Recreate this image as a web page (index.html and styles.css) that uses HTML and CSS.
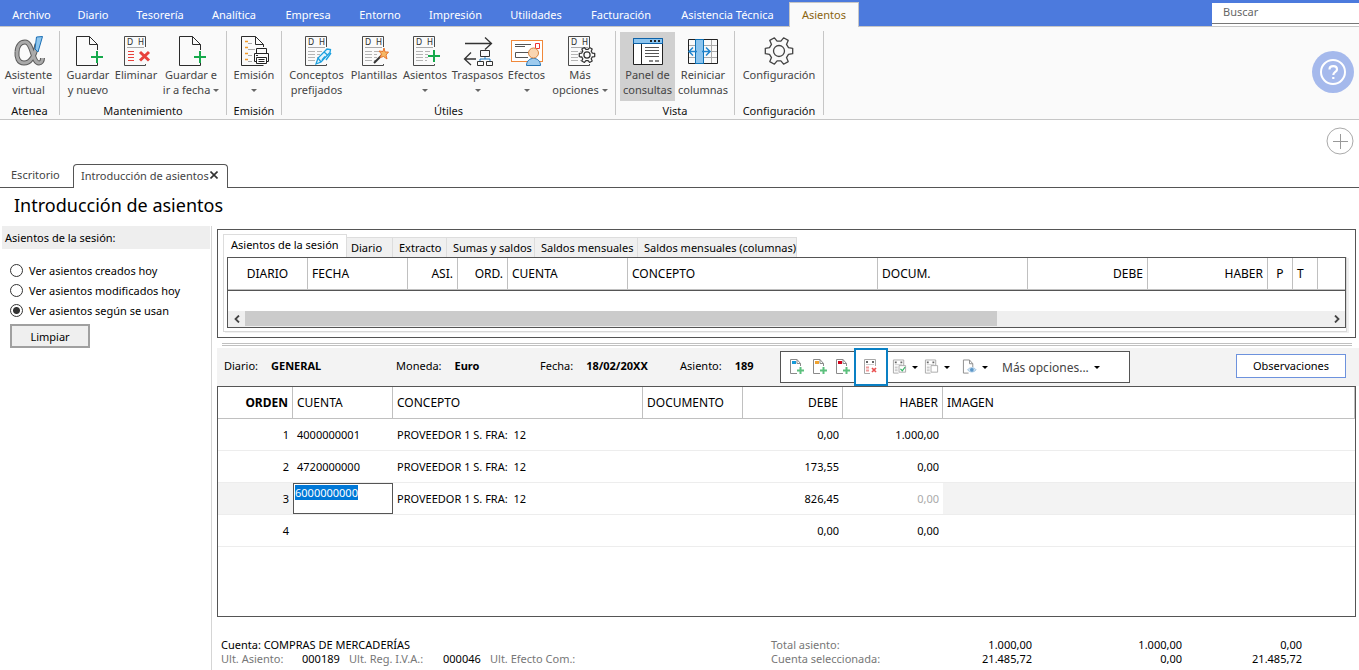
FILE: index.html
```html
<!DOCTYPE html>
<html lang="es">
<head>
<meta charset="utf-8">
<title>Introducción de asientos</title>
<link rel="stylesheet" href="styles.css">
</head>
<body>
<svg class="defs" aria-hidden="true">
  <symbol id="page-plus" viewBox="0 0 32 32">
    <path d="M25.500 15V9.500L17.500 1.500H4.500V30.500H25.500V28M17.500 1.500V9.500H25.500" fill="none" stroke="#2b2b2b"/>
    <path d="M25 16V28M19 22H31" stroke="#16a94b" stroke-width="2"/>
  </symbol>
  <symbol id="ledger" viewBox="0 0 32 32">
    <path d="M25.500 12V1.500H4.500V30.500H25.500V29" fill="none" stroke="#4a4a4a"/>
    <path d="M7 12.500H24" stroke="#aaa"/>
  </symbol>
  <symbol id="ledger-lines" viewBox="0 0 32 32">
    <path d="M7 16.500H14M7 19.500H14M7 22.500H14M7 25.500H14M16 16.500H21M16 19.500H19M16 22.500H19M16 25.500H18" stroke="#b4b4b4"/>
  </symbol>
  <symbol id="gear" viewBox="0 0 32 32">
    <path d="M25.500 12.700L29.700 13.300V18.700L25.500 19.300L23.500 22.600L25.200 26.600L20.600 29.200L17.900 25.800H14.100L11.400 29.200L6.800 26.600L8.500 22.600L6.500 19.300L2.300 18.700V13.300L6.500 12.700L8.500 9.400L6.800 5.400L11.400 2.800L14.100 6.200H17.900L20.600 2.800L25.200 5.400L23.500 9.400Z" stroke-linejoin="round"/>
    <circle cx="16" cy="16" r="5.500"/>
  </symbol>
  <symbol id="mini-page" viewBox="0 0 16 18">
    <path d="M11.500 8V5.500L8 1.500H1.500V15.500H8M8 1.500V5.500H11.500" fill="none" stroke="#8a8a8a"/>
    <path d="M11.500 9V16M8 12.500H15" stroke="#5cc07d" stroke-width="2"/>
  </symbol>
  <symbol id="mini-ledger" viewBox="0 0 16 18">
    <path d="M12.500 8V1.500H1.500V15.500H7" fill="none" stroke="#a8a8a8"/>
    <path d="M3 4H5M9 4H11" stroke="#666" stroke-width="2"/>
    <path d="M3 6.500H11" stroke="#ccc"/>
  </symbol>
</svg>

<nav class="menu" aria-label="Menú principal">
  <a href="#">Archivo</a><a href="#">Diario</a><a href="#">Tesorería</a><a href="#">Analítica</a><a href="#">Empresa</a><a href="#">Entorno</a><a href="#">Impresión</a><a href="#">Utilidades</a><a href="#">Facturación</a><a href="#">Asistencia Técnica</a><a href="#" class="current">Asientos</a>
  <input class="search" type="search" placeholder="Buscar" aria-label="Buscar">
</nav>

<header class="ribbon">
  <section class="group atenea">
    <div class="tools">
      <button class="tool"><svg viewBox="0 0 32 32">
        <path d="M24 9C22 20 18 28 11 28C5 28 3.500 22 4 17C4.500 10 8 7 12 7C20 7 19 28 26 28C28 28 29.500 26 29.500 23" fill="none" stroke="#5b5b5b" stroke-width="5"/>
        <path d="M24 9C22 20 18 28 11 28C5 28 3.500 22 4 17C4.500 10 8 7 12 7C20 7 19 28 26 28C28 28 29.500 26 29.500 23" fill="none" stroke="#aaa" stroke-width="3"/>
        <path d="M23.500 2L29.500 1.500L25 17L22 14Z" fill="#8ec6ee" stroke="#1c6fb5"/></svg><span>Asistente<br>virtual</span></button>
    </div><h2>Atenea</h2>
  </section>
  <section class="group mantenimiento">
    <div class="tools">
      <button class="tool"><svg><use href="#page-plus"/></svg><span>Guardar<br>y nuevo</span></button>
      <button class="tool"><svg viewBox="0 0 32 32"><use href="#ledger"/><text x="7" y="10" class="dh">D</text><text x="18" y="10" class="dh">H</text><path d="M8 16.500H14M8 19.500H14M8 22.500H14M8 25.500H14" stroke="#e8413c"/><path d="M20 17L29 25.500M29 17L20 25.500" stroke="#e8413c" stroke-width="3"/></svg><span>Eliminar</span></button>
      <button class="tool"><svg><use href="#page-plus"/></svg><span>Guardar e<br>ir a fecha <i class="caret"></i></span></button>
    </div><h2>Mantenimiento</h2>
  </section>
  <section class="group emision">
    <div class="tools">
      <button class="tool"><svg viewBox="0 0 32 32"><path d="M25.500 12V9.500L17.500 1.500H3.500V30.500H25.500M17.500 1.500V9.500H25.500" fill="none" stroke="#2b2b2b"/>
        <path d="M7 6.500H10M7 12.500H10M7 18.500H10M7 24.500H10" stroke="#f39a28" stroke-width="1.500"/><path d="M10 8.500H14M10 14.500H17M10 20.500H14M10 26.500H14" stroke="#aaa"/>
        <path d="M18.500 18V13.500H28.500V18M19 26.500H16.500V18.500H30.500V26.500H28" fill="#fafafa" stroke="#222"/><path d="M18.500 22.500H28.500V28.500H18.500ZM20.500 24.500H26.500M20.500 26.500H26.500M18 20.500H20" fill="#fff" stroke="#222"/></svg><span>Emisión<br><i class="caret"></i></span></button>
    </div><h2>Emisión</h2>
  </section>
  <section class="group utiles">
    <div class="tools">
      <button class="tool"><svg viewBox="0 0 32 32"><use href="#ledger"/><text x="7" y="10" class="dh">D</text><text x="18" y="10" class="dh">H</text><use href="#ledger-lines"/><path d="M15 29L17 23L26 14L29.500 14.500L29 17.500L20 27Z" fill="#e3f4fd" stroke="#1ba0df" stroke-width="1.300"/><path d="M17 23L20 27M23 17L26.500 20M21 25L24 21.500M25 25L30 18" fill="none" stroke="#1ba0df" stroke-width="1.300"/></svg><span>Conceptos<br>prefijados</span></button>
      <button class="tool"><svg viewBox="0 0 32 32"><use href="#ledger"/><text x="7" y="10" class="dh">D</text><text x="18" y="10" class="dh">H</text><use href="#ledger-lines"/><path d="M16 28L24 20" stroke="#333" stroke-width="2"/><path d="M26 13L27 17L30.500 17L28 20L29 24L25.500 21.500L22 22.500L23.500 19L21 16L25 16.500Z" fill="#f5b765" stroke="#e8742c"/></svg><span>Plantillas</span></button>
      <button class="tool"><svg viewBox="0 0 32 32"><use href="#ledger"/><text x="7" y="10" class="dh">D</text><text x="18" y="10" class="dh">H</text><use href="#ledger-lines"/><path d="M25 15V27M19 21H31" stroke="#16a94b" stroke-width="2"/></svg><span>Asientos<br><i class="caret"></i></span></button>
      <button class="tool"><svg viewBox="0 0 32 32"><path d="M3 8.500H29M23 2.500L29.500 8.500L23 14.500M9 17.500L2.500 24L9 30M3 24H14" fill="none" stroke="#333" stroke-width="1.300"/><path d="M18.500 15.500H27.500V21.500H18.500ZM15.500 26.500H21.500V30.500H15.500ZM24.500 26.500H30.500V30.500H24.500Z" fill="none" stroke="#333"/><path d="M23 22V24M18 26V24H28V26" fill="none" stroke="#1c7cc5"/></svg><span>Traspasos<br><i class="caret"></i></span></button>
      <button class="tool"><svg viewBox="0 0 32 32"><rect x=".5" y="5.500" width="31" height="21" fill="#fff" stroke="#f0883a"/><path d="M4 9.500H20M4 11.500H14M4.500 17.500H19M4.500 17.500V22.500H17" fill="none" stroke="#555"/><path d="M24.500 8.500H28.500V13.500H24.500Z" fill="none" stroke="#e33"/><path d="M15.500 30.500C15.500 21 29.500 21 29.500 30.500Z" fill="#9ecbee" stroke="#2474b5"/><circle cx="22.500" cy="18" r="5" fill="#fad5b0" stroke="#d8853f"/></svg><span>Efectos<br><i class="caret"></i></span></button>
      <button class="tool"><svg viewBox="0 0 32 32"><use href="#ledger"/><text x="7" y="10" class="dh">D</text><text x="18" y="10" class="dh">H</text><use href="#ledger-lines"/><use href="#gear" x="14" y="11" width="18" height="18" fill="#fafafa" stroke="#333" stroke-width="2.200"/></svg><span>Más<br>opciones <i class="caret"></i></span></button>
    </div><h2>Útiles</h2>
  </section>
  <section class="group vista">
    <div class="tools">
      <button class="tool pressed"><svg viewBox="0 0 32 32"><path d="M1.500 3.500H30.500V29.500H1.500Z" fill="#fff" stroke="#222"/><path d="M1.500 3.500H30.500V8.500H1.500Z" fill="#8cc4ee" stroke="#0d62a8"/><path d="M9.500 9V29" stroke="#222"/><path d="M18 6H20M22 6H24M26 6H28" stroke="#222" stroke-width="2"/><path d="M13 12.500H27M13 15.500H27M13 18.500H27M13 21.500H27" stroke="#555"/><path d="M17 26H21M23 26H27" stroke="#888" stroke-width="2"/></svg><span>Panel de<br>consultas</span></button>
      <button class="tool"><svg viewBox="0 0 32 32"><path d="M1 10.500H30M1 16.500H30M1 22.500H30M24.500 4V28" stroke="#aaa"/><path d="M1.500 4.500H30.500V28.500H1.500Z" fill="none" stroke="#222"/><path d="M8.500 4.500H16.500V28.500H8.500Z" fill="#8cc4ee" stroke="#0d72b8"/><path d="M10 16.500H2M6 12.500L2 16.500L6 20.500M15 16.500H23M19 12.500L23 16.500L19 20.500" fill="none" stroke="#2284cc" stroke-width="1.500"/></svg><span>Reiniciar<br>columnas</span></button>
    </div><h2>Vista</h2>
  </section>
  <section class="group config">
    <div class="tools">
      <button class="tool"><svg viewBox="0 0 32 32"><use href="#gear" fill="none" stroke="#444" stroke-width="1.300"/></svg><span>Configuración</span></button>
    </div><h2>Configuración</h2>
  </section>
  <button class="help" aria-label="Ayuda"><svg viewBox="0 0 42 42"><circle cx="21" cy="21" r="21" fill="#a5b9ec"/><circle cx="21" cy="21" r="12" fill="none" stroke="#fff" stroke-width="2"/><path d="M17.500 18.500C17.500 14 25 14 25 18.500C25 21 21.300 21 21.300 24M21.300 26V28" fill="none" stroke="#fff" stroke-width="2.200"/></svg></button>
</header>

<div class="add-row"><button class="add" aria-label="Añadir"><svg viewBox="0 0 28 28"><circle cx="14" cy="14" r="13" fill="#fff" stroke="#aaa"/><path d="M7 14.500H22M14.500 7V22" stroke="#999"/></svg></button></div>

<nav class="doc-tabs" aria-label="Documentos">
  <a href="#">Escritorio</a>
  <div class="open"><a href="#">Introducción de asientos</a><button aria-label="Cerrar"><svg viewBox="0 0 8 8"><path d="M.5 .5L7.500 7.500M7.500 .5L.5 7.500" stroke="#333" stroke-width="1.600"/></svg></button></div>
</nav>
<h1>Introducción de asientos</h1>

<div class="workspace">
  <aside>
    <h2>Asientos de la sesión:</h2>
    <form>
      <label><input type="radio" name="ver">Ver asientos creados hoy</label>
      <label><input type="radio" name="ver">Ver asientos modificados hoy</label>
      <label><input type="radio" name="ver" checked>Ver asientos según se usan</label>
      <button type="button">Limpiar</button>
    </form>
  </aside>
  <main>
    <section class="session">
      <div class="query-tabs">
        <button class="active">Asientos de la sesión</button><button>Diario</button><button>Extracto</button><button>Sumas y saldos</button><button>Saldos mensuales</button><button>Saldos mensuales (columnas)</button>
      </div>
      <div class="pane"><div class="frame">
        <table class="query">
          <colgroup><col class="w80"><col class="w100"><col class="w50"><col class="w50"><col class="w120"><col class="w250"><col class="w150"><col class="w120"><col class="w120"><col class="w25"><col class="w25"><col></colgroup>
          <tr><th class="c">DIARIO</th><th>FECHA</th><th class="r">ASI.</th><th class="r">ORD.</th><th>CUENTA</th><th>CONCEPTO</th><th>DOCUM.</th><th class="r">DEBE</th><th class="r">HABER</th><th class="c">P</th><th>T</th><th></th></tr>
        </table>
        <div class="scroll">
          <button aria-label="Izquierda"><svg viewBox="0 0 6 8"><path d="M5 .5L1.500 4L5 7.500" fill="none" stroke="#444" stroke-width="1.800"/></svg></button>
          <div class="track"><div class="thumb"></div></div>
          <button aria-label="Derecha"><svg viewBox="0 0 6 8"><path d="M1 .5L4.500 4L1 7.500" fill="none" stroke="#444" stroke-width="1.800"/></svg></button>
        </div>
      </div></div>
    </section>
    <div class="splitter"></div>
    <div class="entry-bar">
      <dl>
        <div><dt>Diario:</dt><dd>GENERAL</dd></div>
        <div><dt>Moneda:</dt><dd>Euro</dd></div>
        <div><dt>Fecha:</dt><dd>18/02/20XX</dd></div>
        <div><dt>Asiento:</dt><dd>189</dd></div>
      </dl>
      <div class="mini-tools">
        <button aria-label="Nuevo azul"><svg viewBox="0 0 16 18"><use href="#mini-page"/><path d="M3 3H7V6H3Z" fill="#169ad8"/></svg></button>
        <button aria-label="Nuevo naranja"><svg viewBox="0 0 16 18"><use href="#mini-page"/><path d="M3 3H7V6H3Z" fill="#f0a330"/></svg></button>
        <button aria-label="Nuevo rojo"><svg viewBox="0 0 16 18"><use href="#mini-page"/><path d="M3 3H7V6H3Z" fill="#d0021b"/></svg></button>
        <button class="marked" aria-label="Eliminar línea"><svg viewBox="0 0 16 18"><use href="#mini-ledger"/><path d="M3 9.500H6M3 12.500H6" stroke="#f09a9a" stroke-width="2"/><path d="M9 10L13 14M13 10L9 14" stroke="#ea5050" stroke-width="1.700"/></svg></button>
        <button class="drop" aria-label="Validar"><svg viewBox="0 0 16 18"><use href="#mini-ledger"/><path d="M3 9.500H6M3 12.500H6" stroke="#ccc" stroke-width="2"/><path d="M7.500 7.500H14.500V14.500H7.500Z" fill="#fff" stroke="#aaa"/><path d="M9 11L11 13L14 9" fill="none" stroke="#35b565" stroke-width="1.300"/></svg><i class="caret"></i></button>
        <button class="drop" aria-label="Copiar"><svg viewBox="0 0 16 18"><use href="#mini-ledger"/><path d="M3 9.500H6M3 12.500H6" stroke="#ccc" stroke-width="2"/><path d="M7.500 7.500H14.500V14.500H7.500Z" fill="#fff" stroke="#aaa"/></svg><i class="caret"></i></button>
        <button class="drop last" aria-label="Ver documento"><svg viewBox="0 0 16 18"><path d="M11.500 9V5.500L8 1.500H1.500V15.500H7M8 1.500V5.500H11.500" fill="none" stroke="#8a8a8a"/><path d="M6 12C8 9 13 9 15 12C13 15 8 15 6 12Z" fill="#cfe2f2" stroke="#9cc0de"/><circle cx="10.500" cy="12" r="2" fill="#5a96c8"/></svg><i class="caret"></i></button>
        <button class="more">Más opciones... <i class="caret"></i></button>
      </div>
      <button class="notes">Observaciones</button>
    </div>
    <div class="entries">
      <table>
        <colgroup><col class="w75"><col class="w100"><col class="w250"><col class="w100"><col class="w100"><col class="w100"><col></colgroup>
        <thead><tr><th class="r strong">ORDEN</th><th>CUENTA</th><th>CONCEPTO</th><th>DOCUMENTO</th><th class="r">DEBE</th><th class="r">HABER</th><th>IMAGEN</th></tr></thead>
        <tbody>
          <tr><td class="r">1</td><td>4000000001</td><td>PROVEEDOR 1 S. FRA:&nbsp; 12</td><td></td><td class="r">0,00</td><td class="r">1.000,00</td><td></td></tr>
          <tr><td class="r">2</td><td>4720000000</td><td>PROVEEDOR 1 S. FRA:&nbsp; 12</td><td></td><td class="r">173,55</td><td class="r">0,00</td><td></td></tr>
          <tr class="selected"><td class="r">3</td><td class="edit"><div><input value="6000000000" aria-label="Cuenta"></div></td><td>PROVEEDOR 1 S. FRA:&nbsp; 12</td><td></td><td class="r">826,45</td><td class="r muted">0,00</td><td></td></tr>
          <tr><td class="r">4</td><td></td><td></td><td></td><td class="r">0,00</td><td class="r">0,00</td><td></td></tr>
        </tbody>
      </table>
    </div>
    <footer>
      <div>
        <p>Cuenta: COMPRAS DE MERCADERÍAS</p>
        <p class="last-used"><span>Ult. Asiento:</span><b>000189</b><span>Ult. Reg. I.V.A.:</span><b>000046</b><span>Ult. Efecto Com.:</span></p>
      </div>
      <table class="totals">
        <colgroup><col><col class="w120"><col class="w150"><col class="w120"></colgroup>
        <tr><th>Total asiento:</th><td>1.000,00</td><td>1.000,00</td><td>0,00</td></tr>
        <tr><th>Cuenta seleccionada:</th><td>21.485,72</td><td>0,00</td><td>21.485,72</td></tr>
      </table>
    </footer>
  </main>
</div>
</body>
</html>
```

FILE: styles.css
```css
* { box-sizing: border-box; }
body { margin: 0; background: #fff; color: #000; font: 11px/15px "Noto Sans", "Open Sans", sans-serif; }
button, input { font: inherit; color: inherit; }
button { margin: 0; padding: 0; border: 0; background: none; white-space: nowrap; }
a { color: inherit; text-decoration: none; }
h1, h2, p, dl, dd { margin: 0; font-weight: 400; }
h2 { font-size: 11px; }
svg { display: block; }
.defs { display: none; }
table { border-collapse: separate; border-spacing: 0; table-layout: fixed; width: 100%; }
th { font-weight: 400; text-align: left; }
.caret { display: inline-block; border: 3px solid transparent; border-top-color: #666; border-bottom: 0; vertical-align: 2px; }

.menu { display: grid; grid-template-columns: 63px 60px 74px 74px 74px 70px 81px 80px 90px 123px 70px 1fr 147px; height: 27px; background: #4c7add; border-bottom: 1px solid #c6c6c6; color: #fff; }
.menu a { padding-top: 7px; text-align: center; white-space: nowrap; }
.menu .current { margin: 2px 0 -1px; padding-top: 4px; background: #fafafa; border: 1px solid #c6c6c6; border-width: 1px 1px 0; color: #8a6410; }
.search { grid-column: 13; height: 21px; margin-top: 3px; padding: 0 11px 3px; border: 0; border-bottom: 1px solid #777; background: #fff; box-shadow: 0 2px #fff; outline: 0; border-radius: 0; }
.search::placeholder { color: #666; opacity: 1; }

.ribbon { display: flex; height: 93px; background: #fafafa; border-bottom: 1px solid #c6c6c6; }
.group { margin: 4px 0; border-right: 1px solid #c6c6c6; padding-top: 1px; }
.tools { display: grid; height: 71px; }
.tool { display: flex; flex-direction: column; align-items: center; height: 69px; padding-top: 3px; color: #444; line-height: 15px; }
.tool svg { width: 32px; height: 32px; }
.tool span { min-height: 30px; }
.pressed { background: #d0d0d0; }
.group h2 { text-align: center; line-height: 15px; color: #111; }
.dh { font: 8px "DejaVu Sans", sans-serif; fill: #333; }
.atenea { width: 60px; }
.atenea .tools { grid-template-columns: 57px; }
.mantenimiento .tools { grid-template-columns: 56px 40px 70px; }
.emision .tools { grid-template-columns: 54px; }
.utiles .tools { grid-template-columns: 69px 46px 56px 49px 49px 64px; }
.utiles .tool:last-child { margin-right: 6px; }
.vista .tools { padding: 0 3px 0 4px; grid-template-columns: 55px 56px; }
.config .tools { grid-template-columns: 88px; }
.help { width: 42px; height: 42px; margin: 24px 5px 0 auto; }

.add-row { display: flex; justify-content: flex-end; height: 44px; padding: 7px 5px 0; }
.add, .add svg { width: 28px; height: 28px; }

.doc-tabs { display: flex; align-items: flex-end; height: 24px; border-bottom: 1px solid #555; color: #444; }
.doc-tabs > a { width: 73px; padding-left: 11px; line-height: 25px; }
.open { display: flex; align-items: center; justify-content: space-between; width: 155px; height: 24px; margin-bottom: -1px; padding: 0 9px 3px 7px; background: #fff; border: 1px solid #555; border-bottom: 0; border-radius: 4px 4px 0 0; }
.open svg { width: 8px; height: 8px; }
h1 { padding-left: 14px; font-size: 18px; line-height: 35px; height: 38px; }

.workspace { display: flex; min-height: 444px; }
aside { flex: 0 0 212px; padding: 0 1px 0 2px; border-right: 1px solid #d5d5d5; }
aside h2 { padding-left: 3px; background: #eee; line-height: 23px; }
aside form { display: flex; flex-direction: column; padding: 11px 8px; }
aside label { display: flex; align-items: center; gap: 6px; height: 20px; }
input[type=radio] { appearance: none; width: 13px; height: 13px; margin: 0; border: 1px solid #333; border-radius: 50%; background: #fff; }
input[type=radio]:checked { background: radial-gradient(#333 0 3px, #fff 4px); }
aside button { width: 80px; height: 24px; margin-top: 4px; border: 2px solid #a0a0a0; background: #efefef; }

main { flex: 1; min-width: 0; padding: 3px 0 0 5px; }
.session { margin-right: 3px; padding: 4px 8px 6px 5px; height: 109px; border: 1px solid #555; }
.query-tabs { display: grid; grid-template-columns: 124px 46px 54px 88px 103px 159px; align-items: end; height: 23px; }
.query-tabs button { height: 20px; padding: 0 0 1px 4px; border: 1px solid #ddd; border-width: 1px 1px 0 0; background: #f0f0f0; text-align: left; line-height: 17px; }
.query-tabs button:nth-child(n+3) { padding-left: 6px; }
.query-tabs .active { height: 23px; padding: 0 7px 2px; border-left-width: 1px; background: #fff; line-height: 20px; }
.pane { padding: 0 0 3px 3px; border: 1px solid #d8d8d8; border-top: 0; box-shadow: 2px 1px #f0f0f0; }
.frame { border: 1px solid #555; }
.query { border-bottom: 1px solid #555; }
.query th { height: 32px; padding: 0 4px; border-right: 1px solid #c0c0c0; border-bottom: 1px solid #c0c0c0; }
.query th:last-child { border-right: 0; }
th { font-size: 12px; white-space: nowrap; }
td { white-space: nowrap; }
table .r { text-align: right; }
table .c { text-align: center; }
.w25 { width: 25px; }
.w50 { width: 50px; }
.w75 { width: 75px; }
.w80 { width: 80px; }
.w100 { width: 100px; }
.w120 { width: 120px; }
.w150 { width: 150px; }
.w250 { width: 250px; }
.scroll { display: flex; height: 16px; margin-top: 20px; background: #efefef; }
.scroll button { display: grid; place-items: center; width: 17px; }
.scroll svg { width: 6px; height: 8px; }
.track { flex: 1; }
.thumb { width: 69.4%; height: 15px; background: #cbcbcb; }
.splitter { height: 3px; margin: 5px 7px 2px 5px; border: 1px solid #c0c0c0; border-width: 1px 0; }

.entry-bar { display: flex; align-items: center; height: 38px; background: #f3f3f3; }
dl { display: grid; grid-template-columns: 172px 144px 140px 100px; padding: 0 0 3px 7px; }
dl div { display: flex; gap: 13px; }
dd { font-weight: 700; }
.mini-tools { display: flex; align-items: center; flex: 0 0 350px; height: 32px; padding-left: 4px; background: #fff; border: 1px solid #555; }
.mini-tools .caret { border-top-color: #000; }
.mini-tools svg { width: 16px; height: 18px; }
.mini-tools button { display: flex; align-items: center; justify-content: center; gap: 5px; width: 23px; }
.mini-tools .marked { width: 34px; height: 38px; margin-right: 4px; background: #fff; border: 2px solid #0a80c4; }
.mini-tools .drop { width: 26px; margin-right: 6px; }
.mini-tools .last { margin: 0 14px 0 6px; }
.mini-tools .more { width: auto; font-size: 12px; color: #444; }
.notes { width: 110px; height: 24px; margin: 0 13px 3px auto; background: #fff; border: 1px solid #6d92dd; }

.entries { height: 231px; margin-right: 3px; border: 1px solid #555; }
.entries th, .entries td { padding: 0 4px; height: 32px; }
.entries th { border-right: 1px solid #c0c0c0; border-bottom: 1px solid #c0c0c0; }
.entries td { border-bottom: 1px solid #ededed; }
.entries .strong { font-weight: 700; }
.selected td:first-child, .selected td:last-child { background: #f3f3f3; }
.entries .edit { padding: 0; }
.edit div { display: flex; align-items: flex-start; height: 31px; padding: 1px; border: 1px solid #555; }
.edit input { field-sizing: content; padding: 0; border: 0; border-radius: 0; outline: 0; height: 15px; background: #0078d7; color: #fff; }
.muted { color: #aaa; }

footer { display: flex; justify-content: space-between; padding: 21px 57px 0 4px; line-height: 14px; }
.last-used { display: grid; grid-template-columns: 81px 47px 94px 47px auto; color: #777; }
.last-used b { font-weight: 400; color: #000; }
.totals { width: 531px; }
.totals th, .totals td { padding: 0; font-size: 11px; line-height: 14px; }
.totals th { color: #777; }
.totals td { text-align: right; }
```
